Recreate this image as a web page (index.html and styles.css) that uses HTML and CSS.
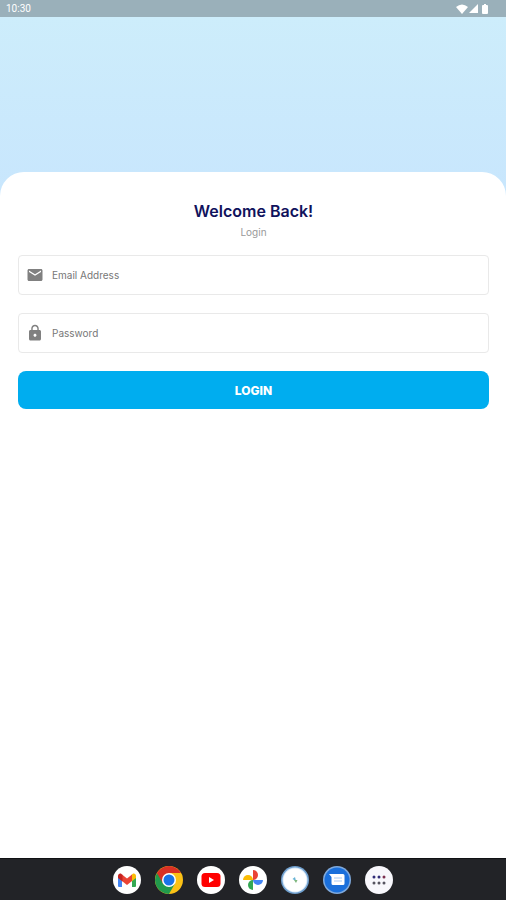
FILE: index.html
```html
<!DOCTYPE html>
<html lang="en">
<head>
    <meta charset="utf-8">
    <title>Login</title>
    <meta name="viewport" content="width=device-width, initial-scale=1">
    <link rel="stylesheet" href="styles.css">
</head>
<body>
    <header class="status-bar">
        <span>10:30</span>
        <div class="status-icons">
            <svg width="12" height="10" viewBox="0 0 12 10"><path d="M0 3Q6-2 12 3L6 10Z"/></svg>
            <svg width="9" height="10" viewBox="0 0 9 10"><path d="M9 0V9H0Z"/></svg>
            <svg class="battery" width="6" height="10" viewBox="0 0 6 10"><path d="M2 0h2v1h1q1 0 1 1v7q0 1-1 1H1q-1 0-1-1V2q0-1 1-1h1Z"/></svg>
        </div>
    </header>

    <main class="login-card">
        <h1>Welcome Back!</h1>
        <p class="subtitle">Login</p>
        <form class="login-form">
            <div class="field">
                <label for="email" aria-label="Email Address">
                    <svg width="18" height="18" viewBox="0 0 24 24"><path d="M20 4H4c-1.100 0-2 .9-2 2v12c0 1.100.9 2 2 2h16c1.100 0 2-.9 2-2V6c0-1.100-.9-2-2-2zm0 4l-8 5-8-5V6l8 5 8-5v2z"/></svg>
                </label>
                <input type="email" id="email" placeholder="Email Address">
            </div>
            <div class="field">
                <label for="password" aria-label="Password">
                    <svg width="18" height="18" viewBox="0 0 24 24"><path fill-rule="evenodd" d="M18 8h-1V6c0-2.760-2.240-5-5-5S7 3.240 7 6v2H6c-1.100 0-2 .9-2 2v10c0 1.100.9 2 2 2h12c1.100 0 2-.9 2-2V10c0-1.100-.9-2-2-2zm-6 9c-1.100 0-2-.9-2-2s.9-2 2-2 2 .9 2 2-.9 2-2 2zM15.100 8H8.900V6c0-1.710 1.390-3.100 3.100-3.100s3.100 1.390 3.100 3.100v2z"/></svg>
                </label>
                <input type="password" id="password" placeholder="Password">
            </div>
            <button type="submit" class="login-button">LOGIN</button>
        </form>
    </main>

    <nav class="dock">
        <a href="#" aria-label="Gmail">
            <svg viewBox="0 0 28 28">
                <circle cx="14" cy="14" r="14" fill="#fff"/>
                <path d="M5 10v10q0 1 1 1h3v-9z" fill="#4285f4"/>
                <path d="M23 10v10q0 1-1 1h-3v-9z" fill="#34a853"/>
                <path d="M18.500 9l1-1c1.500-1.200 3.500 0 3.500 2v2l-4.500 3.500z" fill="#fbbc04"/>
                <path d="M9 8.500l5 4 5-4V15l-5 4-5-4z" fill="#ea4335"/>
                <path d="M5 12v-2c0-2 2-3.200 3.500-2l1 1v6.500z" fill="#c5221f"/>
            </svg>
        </a>
        <a href="#" aria-label="Chrome">
            <svg viewBox="0 0 28 28">
                <circle cx="14" cy="14" r="14" fill="#fbc116"/>
                <path d="M14 14L1.900 7A14 14 0 0 0 14 28L20 17.500Z" fill="#219a4c"/>
                <path d="M14 14L8 17.500L1.900 7A14 14 0 0 1 26.100 7H14Z" fill="#d93025"/>
                <circle cx="14" cy="14" r="7" fill="#fff"/>
                <circle cx="14" cy="14" r="5.500" fill="#1a73e8"/>
            </svg>
        </a>
        <a href="#" aria-label="YouTube">
            <svg viewBox="0 0 28 28">
                <circle cx="14" cy="14" r="14" fill="#fff"/>
                <rect x="4.500" y="7" width="19" height="14" rx="3.500" fill="#f00"/>
                <path d="M12 11v6l5-3z" fill="#fff"/>
            </svg>
        </a>
        <a href="#" aria-label="Photos">
            <svg viewBox="0 0 28 28">
                <circle cx="14" cy="14" r="14" fill="#fff"/>
                <path d="M14 14V4a5 5 0 0 1 0 10z" fill="#ea4335"/>
                <path d="M14 14h10a5 5 0 0 1-10 0z" fill="#4285f4"/>
                <path d="M14 14v10a5 5 0 0 1 0-10z" fill="#34a853"/>
                <path d="M14 14H4a5 5 0 0 1 10 0z" fill="#fbbc04"/>
            </svg>
        </a>
        <a href="#" aria-label="Login app">
            <svg viewBox="0 0 28 28">
                <circle cx="14" cy="14" r="14" fill="#6f9fce"/>
                <circle cx="14" cy="14" r="12.500" fill="#d7e8f8"/>
                <circle cx="14" cy="14" r="11.500" fill="#fff"/>
                <path d="M11.500 13l2.500-2 1 4z" fill="#67b3d4"/>
                <path d="M13 14l3.500 0-1.500 3z" fill="#7eb77e"/>
            </svg>
        </a>
        <a href="#" aria-label="Messages">
            <svg viewBox="0 0 28 28">
                <circle cx="14" cy="14" r="14" fill="#7fa9dc"/>
                <circle cx="14" cy="14" r="12.500" fill="#1a6fdb"/>
                <path d="M6 8h14q1.500 0 1.500 1.500v8q0 1.500-1.500 1.500H10q-1.500 0-1.500-1.500V11z" fill="#fff"/>
                <path d="M11 12h8M11 15h8" stroke="#a9c9f3"/>
            </svg>
        </a>
        <a href="#" aria-label="All apps">
            <svg viewBox="0 0 28 28">
                <circle cx="14" cy="14" r="14" fill="#f8f7fc"/>
                <g fill="#302c78">
                    <circle cx="9" cy="11" r="1.500"/>
                    <circle cx="14" cy="11" r="1.500"/>
                    <circle cx="19" cy="11" r="1.500" fill="#7c3050"/>
                </g>
                <g fill="#55535f">
                    <circle cx="9" cy="17" r="1.500"/>
                    <circle cx="14" cy="17" r="1.500"/>
                    <circle cx="19" cy="17" r="1.500"/>
                </g>
            </svg>
        </a>
    </nav>
</body>
</html>
```

FILE: styles.css
```css
* {
    box-sizing: border-box;
}
body {
    display: flex;
    flex-direction: column;
    min-height: 100vh;
    margin: 0;
    font-family: Inter, sans-serif;
    background: linear-gradient(#cdedfb 16px, #c8e6fd 196px);
}
.status-bar {
    display: flex;
    justify-content: space-between;
    align-items: center;
    height: 17px;
    margin-bottom: 155px;
    padding: 0 18px 0 6px;
    background-color: #9ab0ba;
    color: #fff;
    font-family: Roboto, sans-serif;
    font-size: 10px;
}
.status-icons {
    display: flex;
    gap: 1px;
}
.status-icons svg {
    fill: #fff;
}
.status-icons .battery {
    margin-left: 3px;
}
.login-card {
    flex: 1;
    padding: 29px 17px 29px 18px;
    background-color: #fff;
    border-radius: 24px 24px 0 0;
    text-align: center;
}
h1 {
    margin: 0;
    color: #10125c;
    font-size: 16px;
    line-height: 20px;
    font-weight: 600;
}
.subtitle {
    margin: 4px 0 16px;
    color: #999;
    font-size: 10px;
    line-height: 14px;
}
.login-form {
    display: flex;
    flex-direction: column;
    gap: 18px;
}
.field {
    display: flex;
    align-items: center;
    height: 40px;
    padding: 0 7px;
    border: 1px solid #e9e9e9;
    border-radius: 4px;
}
.field label {
    display: flex;
}
.field svg {
    fill: #808080;
}
.field input {
    flex: 1;
    min-width: 0;
    padding: 0 8px;
    border: none;
    outline: none;
    background: none;
    font-family: inherit;
    font-size: 10px;
}
.field input::placeholder {
    color: #777;
}
.login-button {
    height: 38px;
    border: none;
    border-radius: 8px;
    background-color: #00adef;
    color: #fff;
    font-family: inherit;
    font-size: 12px;
    font-weight: 800;
    cursor: pointer;
}
.dock {
    display: flex;
    justify-content: center;
    align-items: center;
    gap: 14px;
    height: 42px;
    border-top: 1px solid #101114;
    background-color: #222327;
}
.dock svg {
    display: block;
    width: 28px;
    height: 28px;
}
```
